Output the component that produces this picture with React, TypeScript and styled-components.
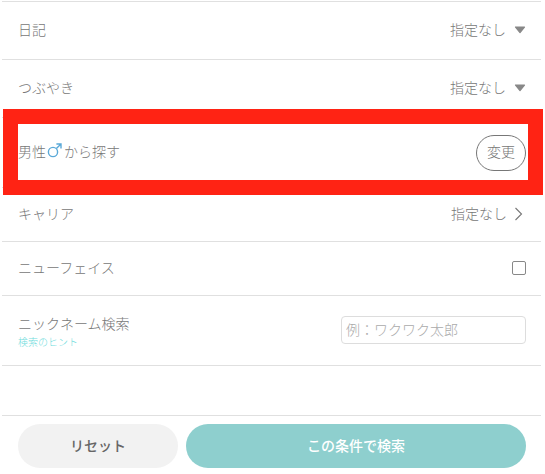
import React from "react";
import styled, { createGlobalStyle } from "styled-components";

const GlobalStyle = createGlobalStyle`
   html, body {
      margin: 0;
      padding: 0;
      background: #fff;
   }
   * {
      box-sizing: border-box;
   }
`;

const CaretIcon = () => (
   <Caret width="12" height="8" viewBox="0 0 12 8">
      <path d="M1.5 1h9L6 6.6z" fill="#888" stroke="#888" strokeWidth="1.2" strokeLinejoin="round" />
   </Caret>
);

const ChevronIcon = () => (
   <Chevron width="9" height="14" viewBox="0 0 9 14">
      <path d="M1.5 1l6 6-6 6" fill="none" stroke="#777" strokeWidth="1.1" />
   </Chevron>
);

const MaleIcon = () => (
   <svg width="15" height="15" viewBox="0 0 15 15">
      <circle cx="6" cy="9" r="4.6" fill="none" stroke="#5aa9d8" strokeWidth="1.4" />
      <path d="M9.4 5.6L14 1M9.4 1H14v4.6" fill="none" stroke="#5aa9d8" strokeWidth="1.4" />
   </svg>
);

export default function App() {
   return (
      <Page>
         <GlobalStyle />
         <Row $height={58}>
            <Label>日記</Label>
            <Value>指定なし<CaretIcon /></Value>
         </Row>
         <Row $height={58}>
            <Label>つぶやき</Label>
            <Value>指定なし<CaretIcon /></Value>
         </Row>
         <Row $height={70}>
            <GenderLabel>男性<MaleIcon />から探す</GenderLabel>
            <ChangeButton>変更</ChangeButton>
            <Highlight />
         </Row>
         <Row $height={54}>
            <Label>キャリア</Label>
            <Value>指定なし<ChevronIcon /></Value>
         </Row>
         <Row $height={54}>
            <Label>ニューフェイス</Label>
            <CheckBox />
         </Row>
         <Row $height={70}>
            <div>
               <Label>ニックネーム検索</Label>
               <Hint>検索のヒント</Hint>
            </div>
            <NameInput placeholder="例：ワクワク太郎" />
         </Row>
         <Spacer />
         <Footer>
            <ResetButton>リセット</ResetButton>
            <SearchButton>この条件で検索</SearchButton>
         </Footer>
      </Page>
   );
}

const Page = styled.div`
   width: 545px;
   height: 474px;
   padding: 1px 4px 0 2px;
   overflow: hidden;
   background: #fff;
   font-family: "Noto Sans CJK JP", "Noto Sans", sans-serif;
   font-weight: 300;
   color: #777;
`;

const Row = styled.div<{ $height: number }>`
   position: relative;
   display: flex;
   align-items: center;
   justify-content: space-between;
   height: ${(props) => props.$height}px;
   padding: 0 15px 0 16px;
   border-top: 1px solid #e0e0e0;
`;

const Label = styled.div`
   padding-bottom: 4px;
   font-size: 14px;
   line-height: 20px;
`;

const GenderLabel = styled(Label)`
   display: flex;
   align-items: center;
   gap: 1px;
   padding-bottom: 3px;
   & > svg {
      margin: 0 1px 2px 0;
   }
`;

const Value = styled.div`
   display: flex;
   align-items: center;
   gap: 8px;
   padding-bottom: 4px;
   font-size: 14px;
   line-height: 20px;
`;

const Caret = styled.svg`
   margin-top: 2px;
`;

const Chevron = styled.svg`
   margin: 2px 3px 0 -1px;
`;

const Hint = styled.div`
   margin-top: -2px;
   font-size: 10px;
   line-height: 14px;
   color: #6fdcdc;
`;

const ChangeButton = styled.button`
   width: 50px;
   height: 36px;
   padding: 0 0 3px;
   border: 1px solid #777;
   border-radius: 18px;
   background: #fff;
   font-family: inherit;
   font-weight: 300;
   font-size: 14px;
   color: #777;
`;

const Highlight = styled.div`
   position: absolute;
   z-index: 1;
   top: -9px;
   left: 1px;
   width: 540px;
   height: 86px;
   border: 15px solid #ff2314;
   pointer-events: none;
`;

const CheckBox = styled.span`
   width: 14px;
   height: 14px;
   margin-bottom: 2px;
   border: 1px solid #888;
   border-radius: 2px;
`;

const NameInput = styled.input`
   width: 185px;
   height: 28px;
   margin-bottom: 2px;
   padding: 0 4px 2px;
   border: 1px solid #ddd;
   border-radius: 4px;
   outline: none;
   font-family: inherit;
   font-weight: 300;
   font-size: 14px;
   &::placeholder {
      color: #aaa;
   }
`;

const Spacer = styled.div`
   height: 50px;
   border-top: 1px solid #e0e0e0;
`;

const Footer = styled.div`
   display: flex;
   gap: 8px;
   padding: 8px 15px 0 16px;
   border-top: 1px solid #e0e0e0;
`;

const FooterButton = styled.button`
   height: 44px;
   padding: 0 0 2px;
   border: none;
   border-radius: 22px;
   font-family: inherit;
   font-size: 14px;
   font-weight: 500;
`;

const ResetButton = styled(FooterButton)`
   width: 160px;
   background: #f2f2f2;
   color: #666;
`;

const SearchButton = styled(FooterButton)`
   width: 340px;
   background: #8ecfce;
   color: #fff;
`;
